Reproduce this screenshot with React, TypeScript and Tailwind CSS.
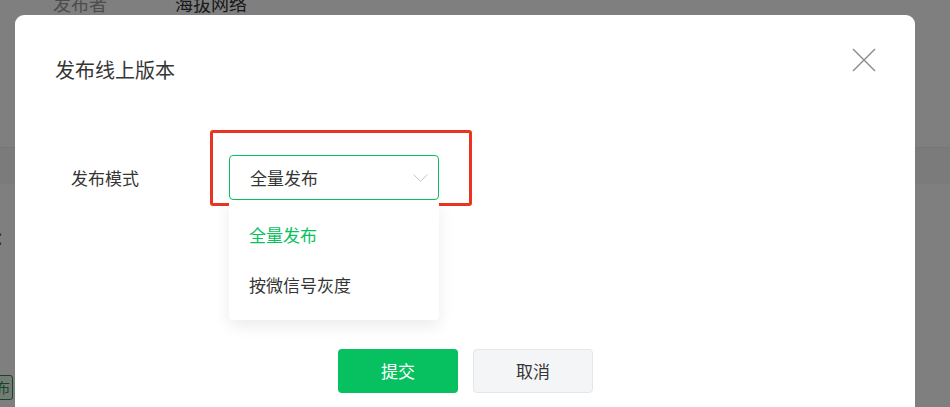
const font = { fontFamily: '"Noto Sans CJK SC", "Noto Sans", sans-serif' };

function BackgroundPage() {
  return (
    <div className="w-[950px] h-[407px] bg-white flex flex-col">
      <div className="h-[157px] flex items-start -mt-[10px] text-[18px] leading-[26px]">
        <span className="ml-[53px] w-[122px] text-[#9a9a9a]">发布者</span>
        <span className="text-[#333]">海拔网络</span>
      </div>
      <div className="h-[37px] bg-[#f7f7f7] border-t border-[#ececec]" />
      <div className="flex-1 flex flex-col">
        <div className="mt-[40px] -ml-[5px] text-[18px] leading-[26px] text-[#333]">：</div>
        <div className="mt-[125px] flex">
          <span className="-ml-[35px] px-[2px] border border-[#2f8f3f] rounded-[3px] bg-[#e8f7ec] text-[#2f8f3f] text-[14px] leading-[23px]">
            已发布
          </span>
        </div>
      </div>
    </div>
  );
}

function Chevron() {
  return (
    <svg width="15" height="8" viewBox="0 0 15 8" fill="none">
      <path d="M0.5 0.5 L7.5 7.3 L14.5 0.5" stroke="#c4c4c4" strokeWidth="1" />
    </svg>
  );
}

function CloseIcon() {
  return (
    <svg width="24" height="24" viewBox="0 0 24 24" fill="none">
      <path d="M1 1 L23 23 M23 1 L1 23" stroke="#8a8a8a" strokeWidth="1.4" />
    </svg>
  );
}

function ModeSelect() {
  return (
    <div className="relative w-[210px]">
      <div className="absolute -left-[19px] -top-[25px] w-[262px] h-[76px] border-[3px] border-[#ea3323] rounded-[3px]" />
      <div className="h-[45px] border border-[#07c160] rounded-[4px] flex items-center pl-[20px] pr-[10px] bg-white">
        <span className="flex-1 text-[17px] text-[#353535]">全量发布</span>
        <Chevron />
      </div>
      <div className="absolute left-0 top-full w-[210px] bg-white rounded-b-[4px] shadow-[0_6px_16px_rgba(0,0,0,0.08)] py-[10px]">
        <div className="h-[50px] flex items-center pl-[20px] text-[17px] text-[#07c160]">全量发布</div>
        <div className="h-[50px] flex items-center pl-[20px] text-[17px] text-[#353535]">按微信号灰度</div>
      </div>
    </div>
  );
}

export default function App() {
  return (
    <div className="relative w-[950px] h-[407px] overflow-hidden" style={font}>
      <BackgroundPage />
      <div className="absolute inset-0 bg-black/50" />
      <div className="absolute left-[15px] top-[15px] w-[900px] h-[430px] bg-white rounded-[9px]">
        <div className="flex items-start">
          <div className="flex-1 pt-[41px] pl-[40px] text-[20px] leading-[28px] text-[#353535]">发布线上版本</div>
          <button className="mt-[33px] mr-[39px]">
            <CloseIcon />
          </button>
        </div>
        <div className="mt-[71px] flex items-center">
          <span className="ml-[56px] w-[158px] text-[17px] text-[#353535]">发布模式</span>
          <ModeSelect />
        </div>
        <div className="mt-[149px] flex justify-center gap-[15px] pl-[1px]">
          <button className="w-[120px] h-[44px] rounded-[4px] bg-[#07c160] text-white text-[17px]">提交</button>
          <button className="w-[120px] h-[44px] rounded-[4px] bg-[#f4f5f7] border border-[#e4e6ea] text-[#353535] text-[17px]">取消</button>
        </div>
      </div>
    </div>
  );
}
